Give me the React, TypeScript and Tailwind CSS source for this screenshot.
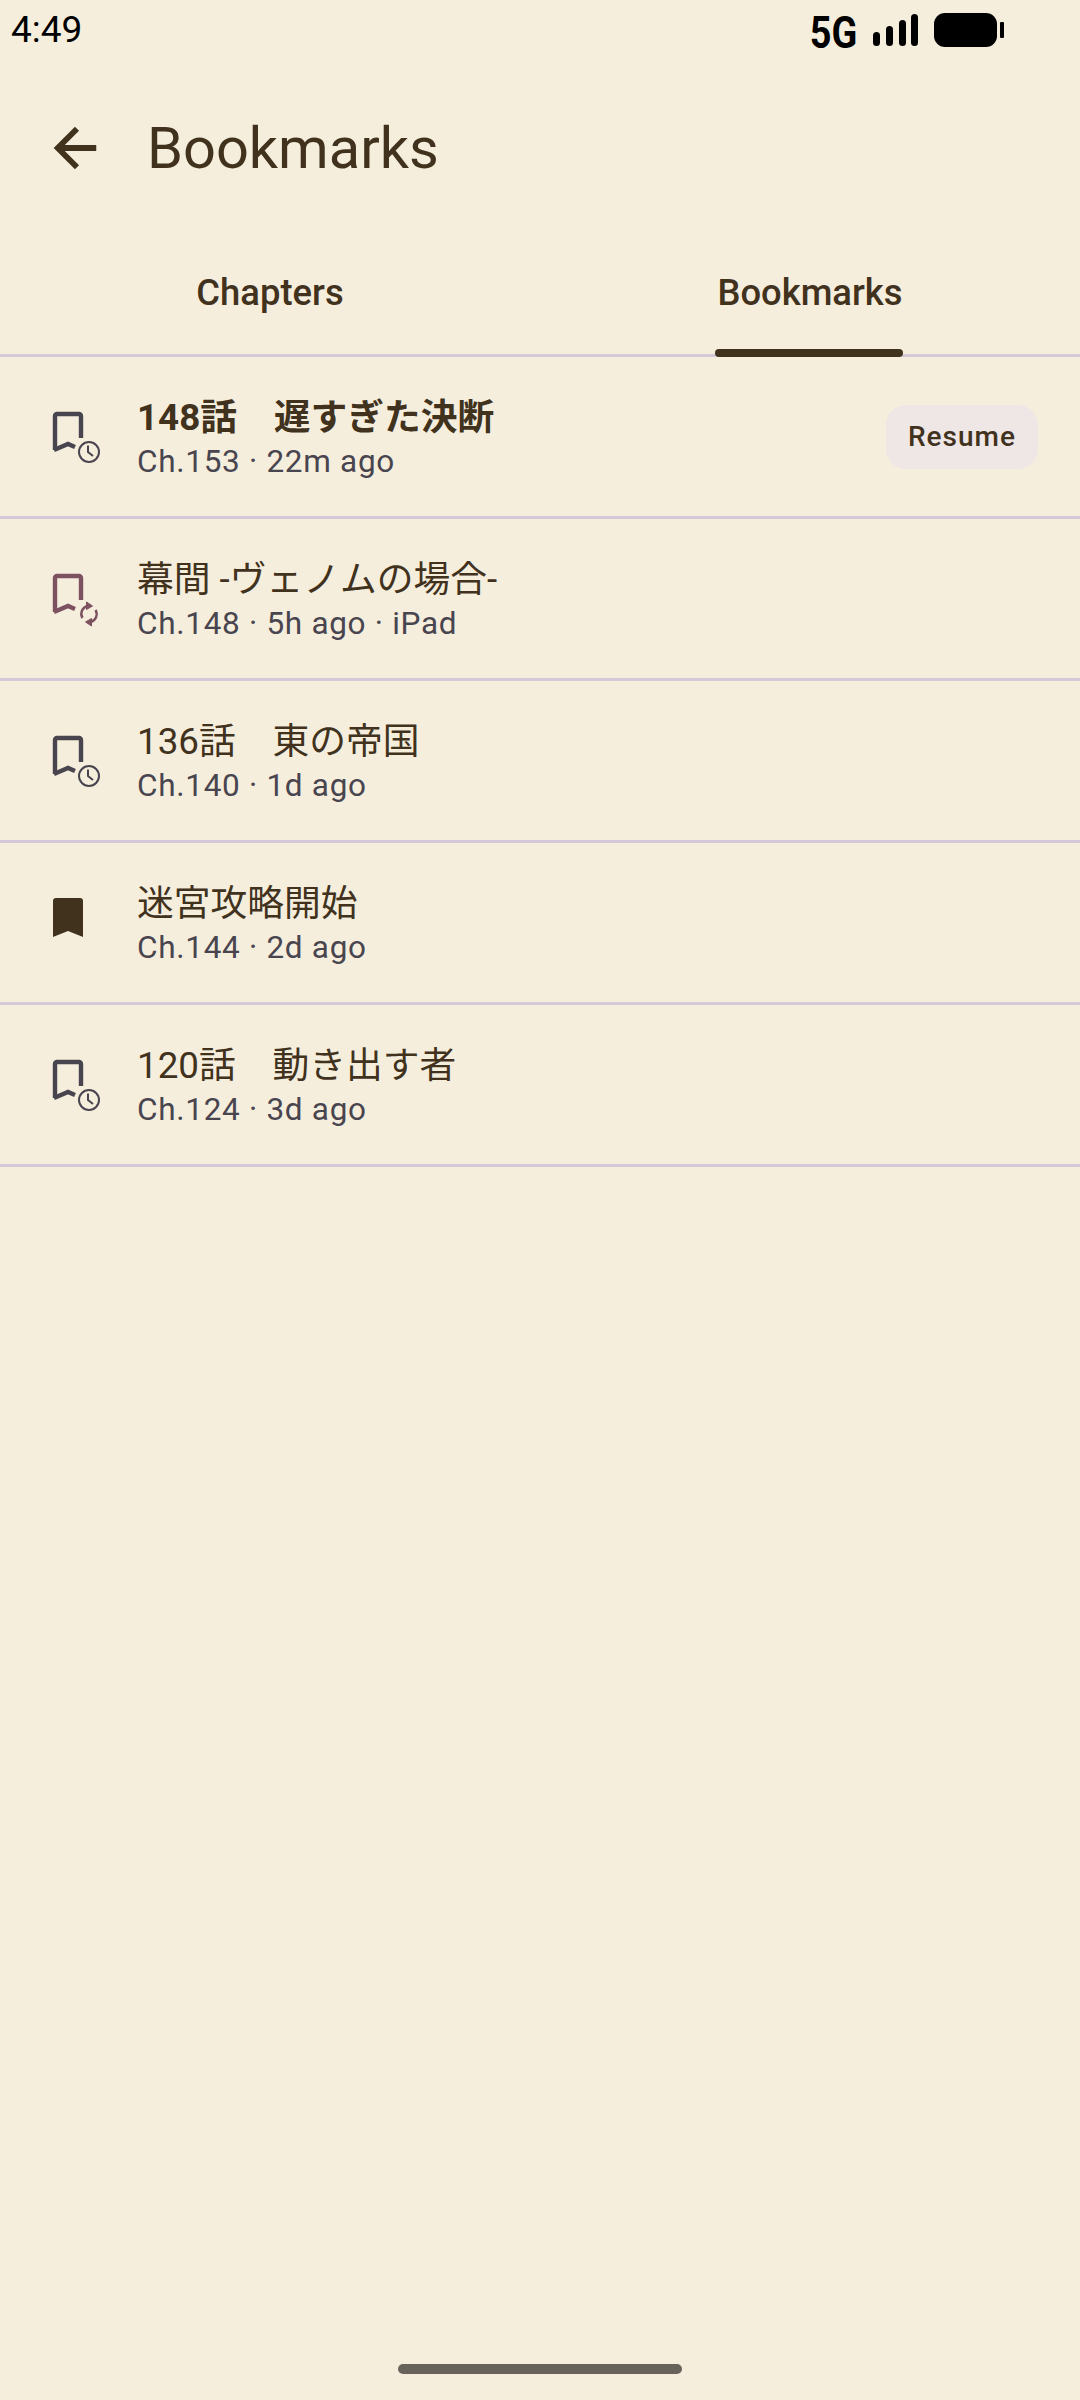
import { ArrowLeft } from 'lucide-react';

type Mark = 'history' | 'sync' | 'saved';

const FONT = "font-['Roboto','Noto_Sans_CJK_JP',sans-serif]";

const ROWS: { title: string; sub: string; mark: Mark; bold?: boolean; resume?: boolean }[] = [
  { title: '148話　遅すぎた決断', sub: 'Ch.153 · 22m ago', mark: 'history', bold: true, resume: true },
  { title: '幕間 -ヴェノムの場合-', sub: 'Ch.148 · 5h ago · iPad', mark: 'sync' },
  { title: '136話　東の帝国', sub: 'Ch.140 · 1d ago', mark: 'history' },
  { title: '迷宮攻略開始', sub: 'Ch.144 · 2d ago', mark: 'saved' },
  { title: '120話　動き出す者', sub: 'Ch.124 · 3d ago', mark: 'history' },
];

function BookmarkIcon({ mark }: { mark: Mark }) {
  if (mark === 'saved') {
    return (
      <svg viewBox="0 0 60 60" className="w-[60px] h-[60px] shrink-0">
        <path d="M13 8a3 3 0 0 1 3-3h24a3 3 0 0 1 3 3v36l-15-6-15 6z" fill="#41321d" />
      </svg>
    );
  }
  const color = mark === 'sync' ? '#7d5260' : '#49454f';
  return (
    <svg viewBox="0 0 60 60" fill="none" stroke={color} className="w-[60px] h-[60px] shrink-0">
      <path d="M15 43V9a2 2 0 0 1 2-2h22a2 2 0 0 1 2 2v22" strokeWidth="4.4" />
      <path d="M14 43l14-6 7 3" strokeWidth="4.4" />
      {mark === 'history' ? (
        <>
          <circle cx="49" cy="45" r="10" strokeWidth="2" />
          <path d="M48 38.5V45l5 4" strokeWidth="2" />
        </>
      ) : (
        <>
          <path d="M42.5 49a8 8 0 0 1 5-12" strokeWidth="2.4" />
          <path d="M55.5 41a8 8 0 0 1-5 12" strokeWidth="2.4" />
          <path d="M46.5 33l6 4-6 3.5z" fill={color} strokeWidth="1" />
          <path d="M51.5 57l-6-4 6-3.5z" fill={color} strokeWidth="1" />
        </>
      )}
    </svg>
  );
}

function StatusBar() {
  return (
    <div className="h-[60px] flex justify-between pl-[11px] pr-[75px] pt-[7px] text-black">
      <span className="text-[37px] leading-[46px] font-['Roboto',sans-serif]">4:49</span>
      <div className="flex items-start pt-[7px]">
        <span className="text-[44px] leading-[38px] font-bold font-['Roboto',sans-serif] scale-x-[0.86] origin-right">5G</span>
        <svg viewBox="0 0 132 40" className="w-[132px] h-[40px] ml-[16px] mt-[-1px]" fill="#000">
          <rect x="0" y="19" width="7" height="14" rx="3.5" />
          <rect x="13" y="13" width="7" height="20" rx="3.5" />
          <rect x="26" y="7" width="7" height="26" rx="3.5" />
          <rect x="38" y="1" width="7" height="32" rx="3.5" />
          <rect x="61" y="0" width="63" height="34" rx="11" />
          <rect x="127" y="9" width="4" height="16" rx="1" />
        </svg>
      </div>
    </div>
  );
}

export default function App() {
  return (
    <div className={`relative w-[1080px] h-[2400px] bg-[#f6eedd] text-[#41321d] flex flex-col ${FONT}`}>
      <StatusBar />
      <div className="h-[176px] flex items-center pl-[44px]">
        <ArrowLeft className="w-[66px] h-[66px]" strokeWidth={2.1} strokeLinecap="butt" strokeLinejoin="miter" />
        <h1 className="ml-[37px] text-[57.75px] font-normal">Bookmarks</h1>
      </div>
      <div className="grid grid-cols-2 h-[121px] border-b-[3px] border-[#d4c9d8]">
        <div className="flex justify-center pt-[33px] text-[36.4px] leading-[48px] font-medium">Chapters</div>
        <div className="flex justify-center pt-[33px] text-[36.4px] leading-[48px] font-medium">
          <span className="relative h-[48px]">
            Bookmarks
            <span className="absolute left-[-2px] right-0 top-[80px] h-[8px] rounded-[4px] bg-[#41321d]" />
          </span>
        </div>
      </div>
      {ROWS.map(r => (
        <div key={r.sub} className="h-[162px] flex items-center pl-[40px] pr-[42px] border-b-[3px] border-[#d4c9d8]">
          <BookmarkIcon mark={r.mark} />
          <div className="ml-[37px] pt-[3px] flex-1 min-w-0">
            <div className={`text-[36.75px] leading-[48px] ${r.bold ? 'font-bold' : 'font-normal'}`}>{r.title}</div>
            <div className="text-[31.5px] leading-[40px] tracking-[0.7px] text-[#49454f]">{r.sub}</div>
          </div>
          {r.resume && (
            <div className="w-[152px] h-[64px] mt-[1px] rounded-[20px] bg-[#efe6e6] flex items-center justify-center text-[28px] font-medium tracking-[1px]">
              Resume
            </div>
          )}
        </div>
      ))}
      <div className="absolute left-[398px] top-[2364px] w-[284px] h-[10px] rounded-full bg-[#67625a]" />
    </div>
  );
}
